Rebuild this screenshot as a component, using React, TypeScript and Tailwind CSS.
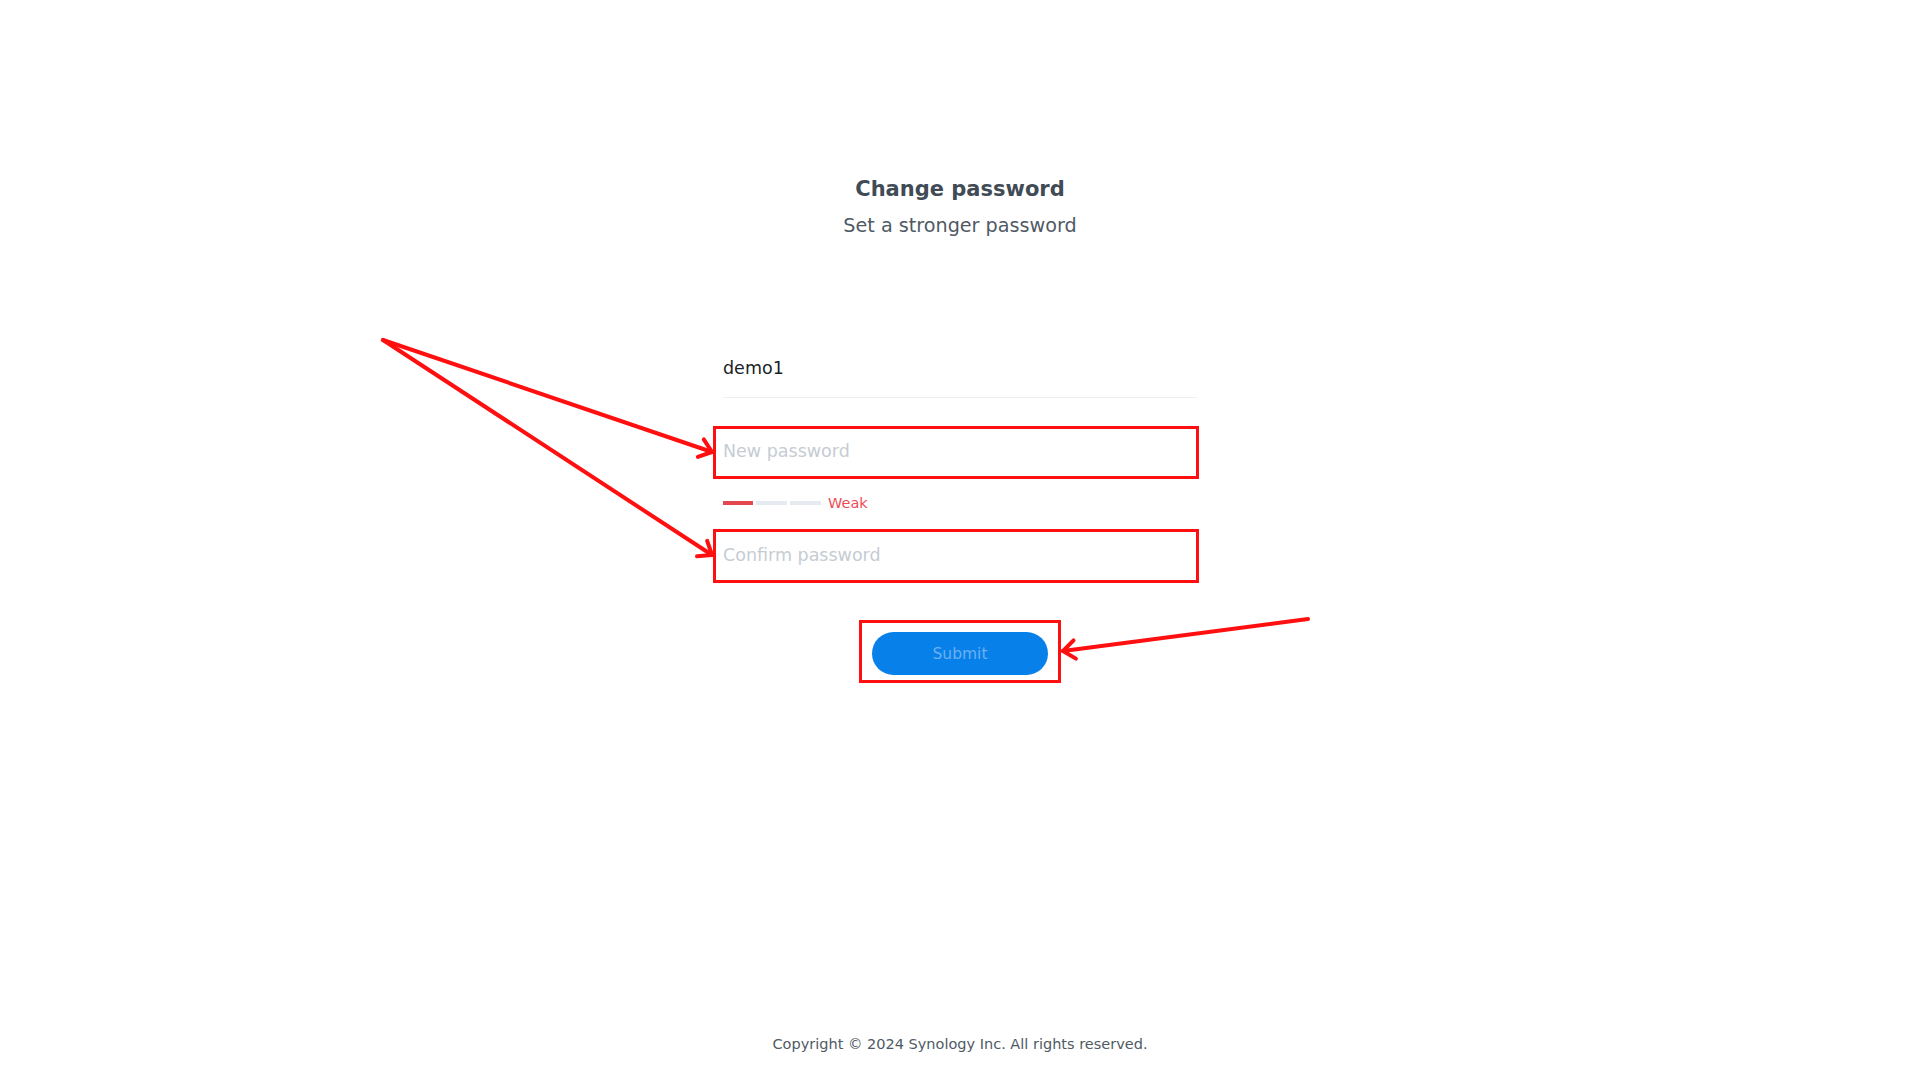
import React from "react";

type Pt = [number, number];

function Arrow({ from, to }: { from: Pt; to: Pt }) {
  const dx = to[0] - from[0];
  const dy = to[1] - from[1];
  const len = Math.hypot(dx, dy);
  const ux = dx / len;
  const uy = dy / len;
  const head = 15;
  const ang = (38 * Math.PI) / 180;
  const cos = Math.cos(ang);
  const sin = Math.sin(ang);
  const bx = -ux;
  const by = -uy;
  const h1: Pt = [to[0] + head * (bx * cos - by * sin), to[1] + head * (bx * sin + by * cos)];
  const h2: Pt = [to[0] + head * (bx * cos + by * sin), to[1] + head * (-bx * sin + by * cos)];
  return (
    <g stroke="#ff0f0f" strokeWidth={4} strokeLinecap="round" strokeLinejoin="round" fill="none">
      <line x1={from[0]} y1={from[1]} x2={to[0]} y2={to[1]} />
      <polyline points={`${h1[0]},${h1[1]} ${to[0]},${to[1]} ${h2[0]},${h2[1]}`} />
    </g>
  );
}

export default function App() {
  return (
    <div
      className="relative w-full h-[1080px] bg-white flex flex-col items-center overflow-hidden"
      style={{ fontFamily: '"DejaVu Sans", Verdana, sans-serif' }}
    >
      <h1 className="mt-[175px] text-[21px] leading-[28px] font-bold text-[#414b55]">Change password</h1>
      <p className="mt-[10px] text-[19.2px] leading-[26px] text-[#505a64]">Set a stronger password</p>

      <div className="mt-[117px] w-[474px] flex flex-col">
        <div className="pb-[17px] border-b border-[#eceef1] text-[17.5px] leading-[24px] text-[#1a1f26]">demo1</div>

        <div className="relative mt-[28px] h-[53px] flex items-center pb-[2px]">
          <span className="text-[17.5px] text-[#c6ccd3]">New password</span>
          <div className="absolute top-0 bottom-0 left-[-10px] right-[-2px] border-[3.5px] border-[#ff1010]" />
        </div>

        <div className="h-[50px] flex items-center gap-[7px] pb-[2px]">
          <div className="flex gap-[3px]">
            <div className="w-[30px] h-[4px] bg-[#e4474d]" />
            <div className="w-[31px] h-[4px] bg-[#e6ebf1]" />
            <div className="w-[31px] h-[4px] bg-[#e6ebf1]" />
          </div>
          <span className="text-[14.5px] text-[#ef4b55] leading-none">Weak</span>
        </div>

        <div className="relative h-[54px] flex items-center border-b border-[#eceef1]">
          <span className="text-[17.5px] text-[#c6ccd3]">Confirm password</span>
          <div className="absolute top-0 bottom-[-1px] left-[-10px] right-[-2px] border-[3.5px] border-[#ff1010]" />
        </div>

        <div className="mt-[49px] flex justify-center">
          <div className="relative">
            <button className="w-[176px] h-[43px] rounded-full bg-[#0880ea] text-[15.5px] leading-[43px] pt-[1px] text-[#6cb0f2]">
              Submit
            </button>
            <div className="absolute top-[-12px] bottom-[-8px] left-[-13px] right-[-13px] border-[3.5px] border-[#ff1010]" />
          </div>
        </div>
      </div>

      <footer className="mt-auto pb-[27px] text-[14.5px] leading-[18px] text-[#505a64]">
        Copyright © 2024 Synology Inc. All rights reserved.
      </footer>

      <svg className="absolute inset-0 pointer-events-none" width="1920" height="1080">
        <Arrow from={[383, 340]} to={[712, 452]} />
        <Arrow from={[383, 340]} to={[712, 555]} />
        <Arrow from={[1308, 619]} to={[1063, 651]} />
      </svg>
    </div>
  );
}
